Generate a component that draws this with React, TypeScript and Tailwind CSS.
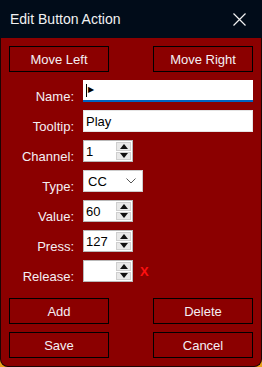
import { ReactNode } from "react";

function DialogButton({ label }: { label: string }) {
  return (
    <button
      type="button"
      className="flex h-[26px] w-[100px] items-center justify-center border border-black text-[13px] leading-none text-[#f4eff4]"
    >
      {label}
    </button>
  );
}

function Label({ children }: { children: ReactNode }) {
  return (
    <span className="flex translate-y-px items-end justify-end text-[13px] leading-none text-[#f4eff4]">
      {children}
    </span>
  );
}

function Spinner({ value }: { value: string }) {
  return (
    <div className="flex h-[22px] w-[50px] border border-[#b9b9b9] bg-white">
      <span className="flex flex-1 items-center pl-[2px] text-[13px] leading-none text-black">
        {value}
      </span>
      <div className="my-[1px] mr-[1px] flex w-[15px] flex-col gap-[1px]">
        <span className="flex flex-1 items-center justify-center border border-[#cfcfcf] bg-[#e9e9e9]">
          <svg width="8" height="5" viewBox="0 0 8 5">
            <path d="M4 0 L8 5 L0 5 Z" fill="#111" />
          </svg>
        </span>
        <span className="flex flex-1 items-center justify-center border border-[#cfcfcf] bg-[#e9e9e9]">
          <svg width="8" height="5" viewBox="0 0 8 5">
            <path d="M0 0 L8 0 L4 5 Z" fill="#111" />
          </svg>
        </span>
      </div>
    </div>
  );
}

export default function App() {
  return (
    <div className="h-[367px] w-[262px] bg-[linear-gradient(#03101c_85%,#e9a21a_85%)] font-['Liberation_Sans',Arial,sans-serif]">
      <div className="flex h-full flex-col">
        {/* title bar */}
        <div className="flex h-[38px] items-center justify-between bg-[#010c19] pl-[10px] pr-[16px]">
          <span className="text-[14px] text-[#f2f2f2]">Edit Button Action</span>
          <svg width="13" height="13" viewBox="0 0 13 13">
            <path d="M0.5 0.5 L12.5 12.5 M12.5 0.5 L0.5 12.5" stroke="#f2f2f2" strokeWidth="1.2" />
          </svg>
        </div>

        {/* body */}
        <div className="flex flex-1 flex-col rounded-b-[8px] border-x border-b border-[#1c0404] bg-[#8b0000] px-[8px] pt-[8px]">
          <div className="flex justify-between">
            <DialogButton label="Move Left" />
            <DialogButton label="Move Right" />
          </div>

          <div className="mt-[8px] grid grid-cols-[65px_auto] gap-x-[9px] gap-y-[8px] [&>*]:h-[22px]">
            <Label>Name:</Label>
            <div className="flex w-[170px] items-center border-b-2 border-[#0064c0] bg-white pl-[3px]">
              <span className="h-[13px] w-px bg-black" />
              <span className="ml-[1px] text-[8px] leading-none text-black">▶</span>
            </div>

            <Label>Tooltip:</Label>
            <div className="flex w-[170px] items-center border border-[#e4e4e4] bg-white pl-[2px] text-[13px] leading-none text-black">
              Play
            </div>

            <Label>Channel:</Label>
            <Spinner value="1" />

            <Label>Type:</Label>
            <div className="flex w-[60px] items-center justify-between border border-[#cccccc] bg-white pl-[4px] pr-[6px] text-[13px] leading-none text-black">
              CC
              <svg width="10" height="6" viewBox="0 0 10 6">
                <path d="M0.5 0.5 L5 5 L9.5 0.5" fill="none" stroke="#555" strokeWidth="1" />
              </svg>
            </div>

            <Label>Value:</Label>
            <Spinner value="60" />

            <Label>Press:</Label>
            <Spinner value="127" />

            <Label>Release:</Label>
            <div className="flex items-center gap-[7px]">
              <Spinner value="" />
              <span className="text-[13px] font-bold leading-none text-[#ff1010]">X</span>
            </div>
          </div>

          <div className="mt-[16px] flex justify-between">
            <DialogButton label="Add" />
            <DialogButton label="Delete" />
          </div>
          <div className="mt-[8px] flex justify-between">
            <DialogButton label="Save" />
            <DialogButton label="Cancel" />
          </div>
        </div>
      </div>
    </div>
  );
}
